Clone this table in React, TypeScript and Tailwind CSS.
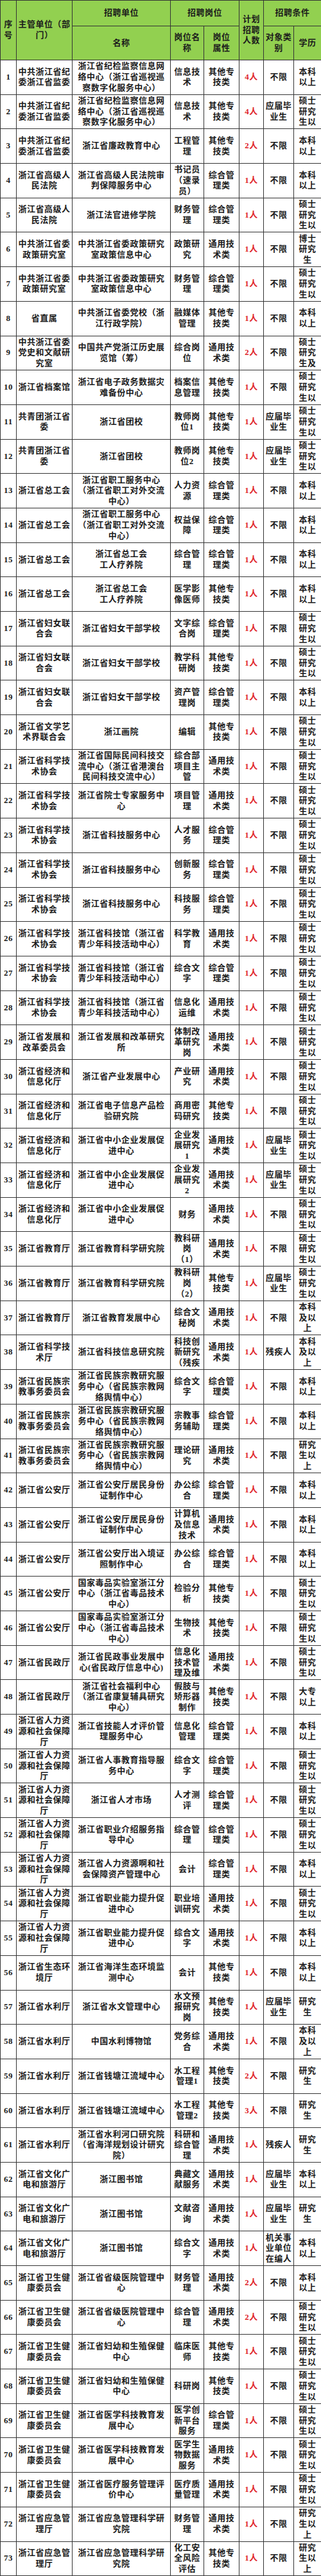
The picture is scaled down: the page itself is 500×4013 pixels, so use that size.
const COLS = 'grid grid-cols-[25px_87px_153px_52px_55px_38px_47px_43px]';

// common cell values, lines split by "|"
const Q = '其他专|技类';
const Z = '综合管|理类';
const T = '通用技|术类';
const N = '不限';
const Y = '应届毕|业生';
const C = '残疾人';
const B = '本科|以上';
const S = '硕士|研究|生以';
const BJ = '本科|及以|上';
const YS = '研究|生以|上';
const YJ = '研究|生';

const JW = '中共浙江省纪|委浙江省监委';
const GY = '浙江省高级人|民法院';
const ZY = '中共浙江省委|政策研究室';
const TW = '共青团浙江省|委';
const ZG = '浙江省总工会';
const FL = '浙江省妇女联|合会';
const KX = '浙江省科学技|术协会';
const JX = '浙江省经济和|信息化厅';
const JY = '浙江省教育厅';
const MZ = '浙江省民族宗|教事务委员会';
const GA = '浙江省公安厅';
const MZT = '浙江省民政厅';
const RS = '浙江省人力资|源和社会保障|厅';
const SL = '浙江省水利厅';
const WH = '浙江省文化广|电和旅游厅';
const WS = '浙江省卫生健|康委员会';
const YJG = '浙江省应急管|理厅';

type Row = [string, string, string, string, string, string, string];

const rows: Row[] = [
  [JW, '浙江省纪检监察信息网|络中心（浙江省巡视巡|察数字化服务中心）', '信息技|术', Q, '4人', N, B],
  [JW, '浙江省纪检监察信息网|络中心（浙江省巡视巡|察数字化服务中心）', '信息技|术', Q, '4人', Y, S],
  [JW, '浙江省廉政教育中心', '工程管|理', Q, '2人', N, B],
  [GY, '浙江省高级人民法院审|判保障服务中心', '书记员|（速录|员）', Z, '1人', N, B],
  [GY, '浙江法官进修学院', '财务管|理', Z, '1人', N, S],
  [ZY, '中共浙江省委政策研究|室政策信息中心', '政策研|究', T, '1人', N, '博士|研究|生'],
  [ZY, '中共浙江省委政策研究|室政策信息中心', '财务管|理', Z, '1人', N, S],
  ['省直属', '中共浙江省委党校（浙|江行政学院）', '融媒体|管理', Q, '1人', N, B],
  ['中共浙江省委|党史和文献研|究室', '中国共产党浙江历史展|览馆（筹）', '综合岗|位', T, '2人', N, '硕士|研究|生及'],
  ['浙江省档案馆', '浙江省电子政务数据灾|难备份中心', '档案信|息管理', Q, '1人', N, S],
  [TW, '浙江省团校', '教师岗|位1', Q, '1人', Y, S],
  [TW, '浙江省团校', '教师岗|位2', Q, '1人', Y, S],
  [ZG, '浙江省职工服务中心|（浙江省职工对外交流|中心）', '人力资|源', Z, '1人', N, B],
  [ZG, '浙江省职工服务中心|（浙江省职工对外交流|中心）', '权益保|障', Z, '1人', N, B],
  [ZG, '浙江省总工会|工人疗养院', '综合管|理', Z, '1人', N, B],
  [ZG, '浙江省总工会|工人疗养院', '医学影|像医师', Q, '1人', N, B],
  [FL, '浙江省妇女干部学校', '文字综|合岗', Z, '1人', N, S],
  [FL, '浙江省妇女干部学校', '教学科|研岗', Q, '1人', N, S],
  [FL, '浙江省妇女干部学校', '资产管|理岗', Z, '1人', N, B],
  ['浙江省文学艺|术界联合会', '浙江画院', '编辑', Q, '1人', N, S],
  [KX, '浙江省国际民间科技交|流中心（浙江省港澳台|民间科技交流中心）', '综合部|项目主|管', T, '1人', N, S],
  [KX, '浙江省院士专家服务中|心', '项目管|理', T, '1人', N, S],
  [KX, '浙江省科技服务中心', '人才服|务', Z, '1人', N, S],
  [KX, '浙江省科技服务中心', '创新服|务', Z, '1人', N, S],
  [KX, '浙江省科技服务中心', '科技服|务', Z, '1人', N, S],
  [KX, '浙江省科技馆（浙江省|青少年科技活动中心）', '科学教|育', T, '1人', N, S],
  [KX, '浙江省科技馆（浙江省|青少年科技活动中心）', '综合文|字', Z, '1人', N, S],
  [KX, '浙江省科技馆（浙江省|青少年科技活动中心）', '信息化|运维', T, '1人', N, S],
  ['浙江省发展和|改革委员会', '浙江省发展和改革研究|所', '体制改|革研究|岗', T, '1人', N, S],
  [JX, '浙江省产业发展中心', '产业研|究', T, '1人', N, S],
  [JX, '浙江省电子信息产品检|验研究院', '商用密|码研究', Q, '1人', N, S],
  [JX, '浙江省中小企业发展促|进中心', '企业发|展研究|1', T, '1人', Y, S],
  [JX, '浙江省中小企业发展促|进中心', '企业发|展研究|2', T, '1人', Y, S],
  [JX, '浙江省中小企业发展促|进中心', '财务', T, '1人', N, S],
  [JY, '浙江省教育科学研究院', '教科研|岗|（1）', T, '1人', N, S],
  [JY, '浙江省教育科学研究院', '教科研|岗|（2）', Q, '1人', Y, S],
  [JY, '浙江省教育发展中心', '综合文|秘岗', T, '1人', N, BJ],
  ['浙江省科学技|术厅', '浙江省科技信息研究院', '科技创|新研究|（残疾', T, '1人', C, BJ],
  [MZ, '浙江省民族宗教研究服|务中心（省民族宗教网|络舆情中心）', '综合文|字', Z, '1人', N, B],
  [MZ, '浙江省民族宗教研究服|务中心（省民族宗教网|络舆情中心）', '宗教事|务辅助', Z, '1人', N, B],
  [MZ, '浙江省民族宗教研究服|务中心（省民族宗教网|络舆情中心）', '理论研|究', T, '1人', N, YS],
  [GA, '浙江省公安厅居民身份|证制作中心', '办公综|合', Z, '1人', N, B],
  [GA, '浙江省公安厅居民身份|证制作中心', '计算机|及信息|技术', T, '1人', N, B],
  [GA, '浙江省公安厅出入境证|照制作中心', '办公综|合', Z, '1人', N, B],
  [GA, '国家毒品实验室浙江分|中心（浙江省毒品技术|中心）', '检验分|析', Q, '1人', N, S],
  [GA, '国家毒品实验室浙江分|中心（浙江省毒品技术|中心）', '生物技|术', Q, '1人', N, S],
  [MZT, '浙江省民政事业发展中|心(省民政厅信息中心)', '信息化|技术管|理及维', T, '1人', N, S],
  [MZT, '浙江省社会福利中心|（浙江省康复辅具研究|中心）', '假肢与|矫形器|制作', Q, '1人', N, '大专|以上'],
  [RS, '浙江省技能人才评价管|理服务中心', '信息化|管理', Z, '1人', N, B],
  [RS, '浙江省人事教育指导服|务中心', '综合文|字', Z, '1人', N, S],
  [RS, '浙江省人才市场', '人才测|评', Z, '1人', N, S],
  [RS, '浙江省职业介绍服务指|导中心', '综合管|理', Z, '1人', N, S],
  [RS, '浙江省人力资源啊和社|会保障资产管理中心', '会计', Z, '1人', N, B],
  [RS, '浙江省职业能力提升促|进中心', '职业培|训研究', T, '1人', N, S],
  [RS, '浙江省职业能力提升促|进中心', '综合文|字', T, '1人', N, B],
  ['浙江省生态环|境厅', '浙江省海洋生态环境监|测中心', '会计', Q, '1人', N, B],
  [SL, '浙江省水文管理中心', '水文预|报研究|岗', Q, '1人', Y, YJ],
  [SL, '中国水利博物馆', '党务综|合', T, '1人', N, BJ],
  [SL, '浙江省钱塘江流域中心', '水工程|管理1', Q, '2人', N, YJ],
  [SL, '浙江省钱塘江流域中心', '水工程|管理2', Q, '3人', N, YJ],
  [SL, '浙江省水利河口研究院|（省海洋规划设计研究|院）', '科研和|综合管|理', T, '1人', C, YJ],
  [WH, '浙江图书馆', '典藏文|献服务', T, '1人', Y, B],
  [WH, '浙江图书馆', '文献咨|询', T, '1人', Y, YJ],
  [WH, '浙江图书馆', '综合文|字', T, '1人', '机关事|业单位|在编人', B],
  [WS, '浙江省省级医院管理中|心', '财务管|理', T, '2人', N, B],
  [WS, '浙江省省级医院管理中|心', '综合管|理', T, '2人', N, S],
  [WS, '浙江省妇幼和生殖保健|中心', '临床医|师', Q, '1人', N, S],
  [WS, '浙江省妇幼和生殖保健|中心', '科研岗', Q, '1人', N, S],
  [WS, '浙江省医学科技教育发|展中心', '医学创|新平台|服务', Z, '1人', N, S],
  [WS, '浙江省医学科技教育发|展中心', '医学生|物数据|服务', T, '1人', N, S],
  [WS, '浙江省医疗服务管理评|价中心', '医疗质|量管理', T, '1人', N, S],
  [YJG, '浙江省应急管理科学研|究院', '财务管|理', T, '1人', N, YS],
  [YJG, '浙江省应急管理科学研|究院', '化工安|全风险|评估', Q, '1人', N, YS],
];

function Cell({ text, className = '' }: { text: string; className?: string }) {
  return (
    <div className={`flex flex-col items-center justify-center overflow-hidden border-r border-b border-[#353535] text-center ${className}`}>
      {text.split('|').map((line, i) => (
        <span key={i} className="whitespace-nowrap">
          {line}
        </span>
      ))}
    </div>
  );
}

export default function App() {
  return (
    <div className="w-[500px] bg-white text-[13px] leading-[16.7px] tracking-[0.5px] font-bold text-[#1c1c1c] [font-family:'Liberation_Serif','Noto_Sans_CJK_SC',serif]">
      <div className="border-l border-t border-[#353535]">
        {/* header */}
        <div className={`${COLS} grid-rows-[40px_53px] bg-[#92d050]`}>
          <Cell text="序|号" className="col-start-1 row-start-1 row-span-2" />
          <Cell text="主管单位（部|门）" className="col-start-2 row-start-1 row-span-2" />
          <Cell text="招聘单位" className="col-start-3 row-start-1" />
          <Cell text="招聘岗位" className="col-start-4 col-span-2 row-start-1" />
          <Cell text="计划|招聘|人数" className="col-start-6 row-start-1 row-span-2" />
          <Cell text="招聘条件" className="col-start-7 col-span-2 row-start-1" />
          <Cell text="名称" className="col-start-3 row-start-2" />
          <Cell text="岗位名|称" className="col-start-4 row-start-2" />
          <Cell text="岗位|属性" className="col-start-5 row-start-2" />
          <Cell text="对象类|别" className="col-start-7 row-start-2" />
          <Cell text="学历" className="col-start-8 row-start-2" />
        </div>

        {/* body */}
        {rows.map((r, i) => (
          <div key={i} className={`${COLS} h-[53.7px]`}>
            <Cell text={String(i + 1)} />
            <Cell text={r[0]} />
            <Cell text={r[1]} />
            <Cell text={r[2]} />
            <Cell text={r[3]} />
            <Cell text={r[4]} className="text-[#e0262b]" />
            <Cell text={r[5]} />
            <Cell text={r[6]} />
          </div>
        ))}
      </div>
    </div>
  );
}
